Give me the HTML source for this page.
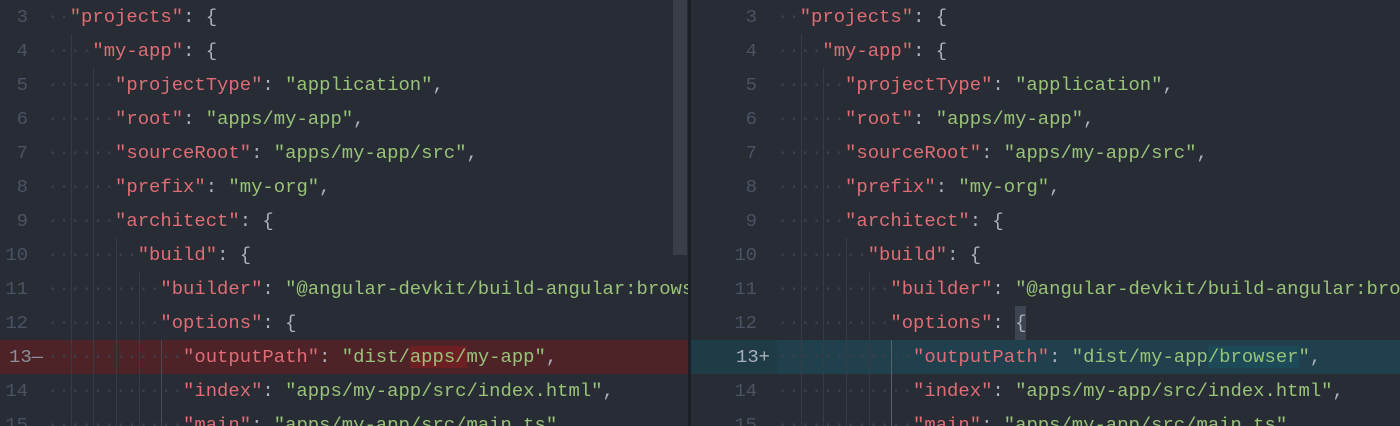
<!DOCTYPE html>
<html><head><meta charset="utf-8"><style>
html,body{margin:0;padding:0;width:1400px;height:426px;overflow:hidden;background:#282c34}
.pane{position:absolute;top:0;height:426px;overflow:hidden;background:#282c34}
.row{position:absolute;left:0;right:0;height:34px;line-height:34px;font-family:"Liberation Mono",monospace;font-size:18.9px;white-space:pre}
.ln{position:absolute;text-align:right;color:#4b5263}
.code{position:absolute;top:0}
.d{color:#3a3f4a}
.k{color:#e06c75}.s{color:#98c379}.p{color:#abb2bf}
.g{position:absolute;width:1px;background:#363b45}
</style></head><body>
<div class="pane" id="L" style="left:0;width:688px"></div>
<div style="position:absolute;left:673px;top:0;width:14px;height:255px;background:#3a3e48"></div>
<div style="position:absolute;left:688px;top:0;width:3px;height:426px;background:#1d2026"></div>
<div class="pane" id="R" style="left:691px;width:709px"></div>
<script>
const cw=11.34;
const lines=[
[3,2,'<span class="k">"projects"</span><span class="p">: {</span>'],
[4,4,'<span class="k">"my-app"</span><span class="p">: {</span>'],
[5,6,'<span class="k">"projectType"</span><span class="p">: </span><span class="s">"application"</span><span class="p">,</span>'],
[6,6,'<span class="k">"root"</span><span class="p">: </span><span class="s">"apps/my-app"</span><span class="p">,</span>'],
[7,6,'<span class="k">"sourceRoot"</span><span class="p">: </span><span class="s">"apps/my-app/src"</span><span class="p">,</span>'],
[8,6,'<span class="k">"prefix"</span><span class="p">: </span><span class="s">"my-org"</span><span class="p">,</span>'],
[9,6,'<span class="k">"architect"</span><span class="p">: {</span>'],
[10,8,'<span class="k">"build"</span><span class="p">: {</span>'],
[11,10,'<span class="k">"builder"</span><span class="p">: </span><span class="s">"@angular-devkit/build-angular:browser"</span><span class="p">,</span>'],
[12,10,'<span class="k">"options"</span><span class="p">: </span><span class="p" BR>{</span>'],
[13,12,null],
[14,12,'<span class="k">"index"</span><span class="p">: </span><span class="s">"apps/my-app/src/index.html"</span><span class="p">,</span>'],
[15,12,'<span class="k">"main"</span><span class="p">: </span><span class="s">"apps/my-app/src/main.ts"</span><span class="p">,</span>']
];
const L13='<span class="k">"outputPath"</span><span class="p">: </span><span class="s">"dist/<span style="background:#6e1f24">apps/</span>my-app"</span><span class="p">,</span>';
const R13='<span class="k">"outputPath"</span><span class="p">: </span><span class="s">"dist/my-app<span style="background:#1d4a57">/browser</span>"</span><span class="p">,</span>';
function build(id,numRight,codeX,side){
  const el=document.getElementById(id);let h='';
  for(const [n,ind,c] of lines){
    const top=(n-3)*34;
    let bg='';
    if(n===13) bg=side==='L'?'background:#4e2328':'background:linear-gradient(90deg,#1f3b45 0,#1f3b45 '+(codeX)+'px,#1f404c '+(codeX)+'px)';
    let code=c;
    if(n===13) code=side==='L'?L13:R13;
    if(n===12) code=code.replace(' BR>', side==='R'?' style="background:#3e4451;padding:6px 0">':'>');
    const num=n===13?(side==='L'?'13—':'13+'):String(n);
    const numCol=n===13?(side==='L'?'#8a8f99':'#aab0bb'):'#4b5263';
    const nr=n===13?numRight+(side==='L'?15:13):numRight;
    h+=`<div class="row" style="top:${top}px;${bg}"><span class="ln" style="right:${el.offsetWidth-nr}px;color:${numCol}">${num}</span><span class="code" style="left:${codeX}px"><span class="d">${'·'.repeat(ind)}</span>${code}</span></div>`;
  }
  const g=[[2,4],[4,5],[6,10],[8,11],[10,13]];
  for(const [k,from] of g){
    const t=(from-3)*34, x=codeX+k*cw+1;
    const col=(k===10&&side==='R')?'#5a606b':(k===10?'#454a55':'#363b45');
    h+=`<div class="g" style="left:${x}px;top:${t}px;height:${426-t}px;background:${col}"></div>`;
  }
  el.innerHTML=h;
}
build('L',28,47,'L');
build('R',66,86,'R');
</script>
</body></html>
